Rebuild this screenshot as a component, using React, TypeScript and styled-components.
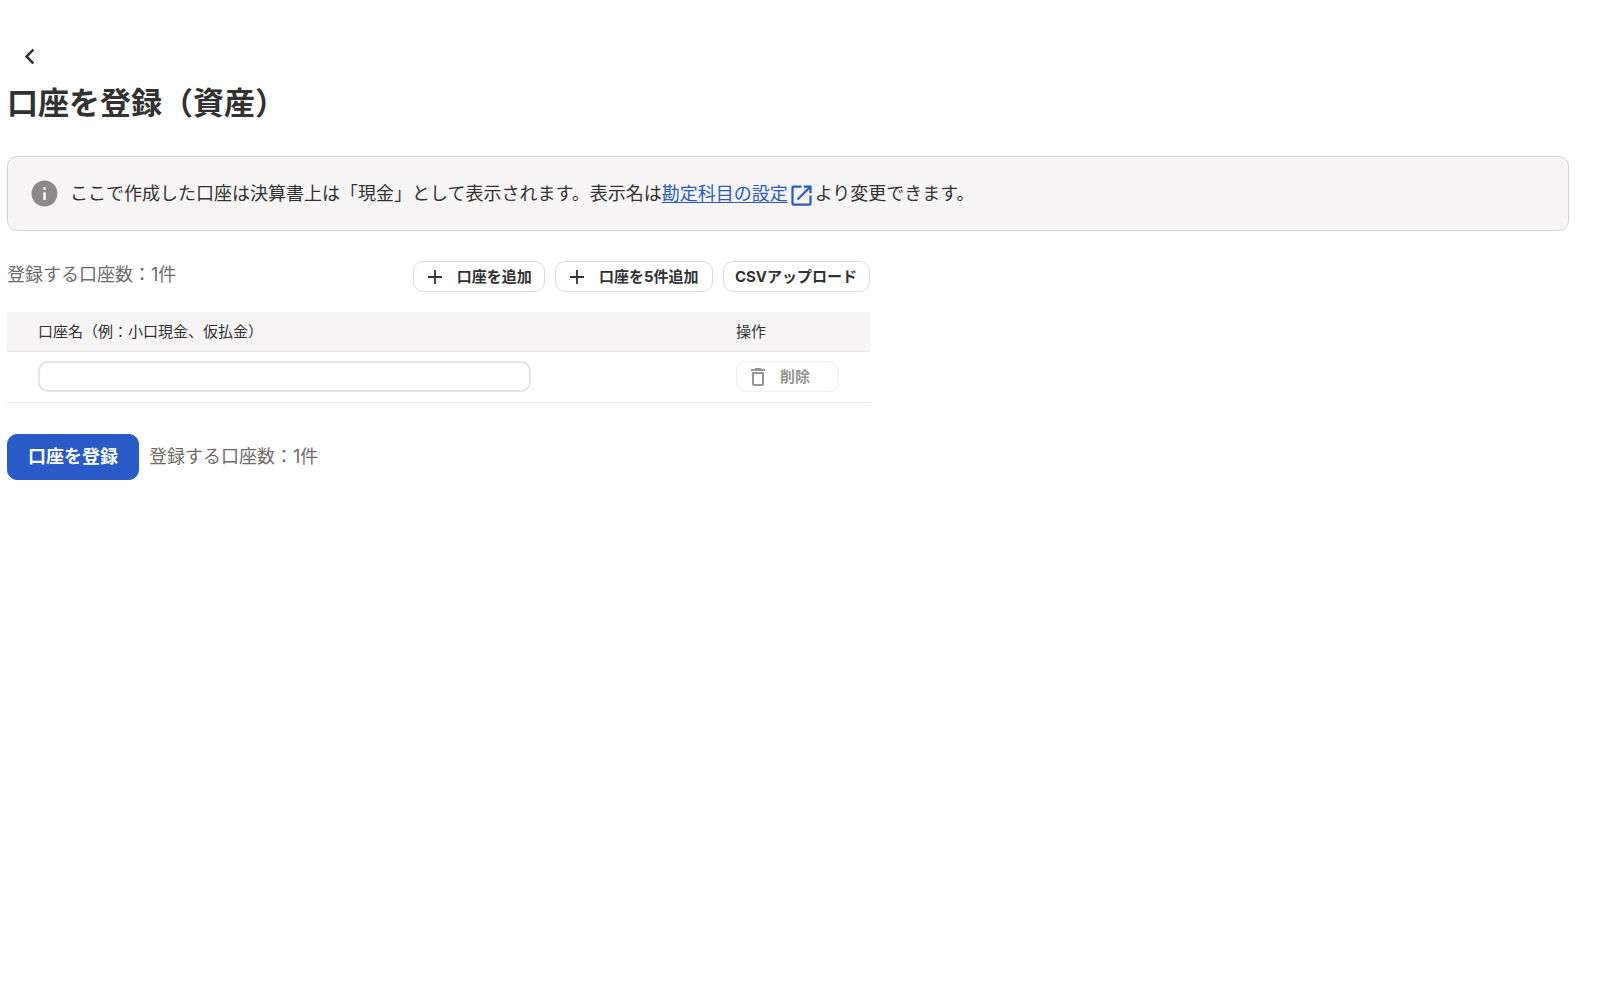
import React, { useState } from "react";
import styled, { createGlobalStyle } from "styled-components";

const GlobalStyle = createGlobalStyle`
  * { box-sizing: border-box; }
  body {
    margin: 0;
    background: #fff;
    color: #323232;
    font-family: Inter, "Noto Sans CJK JP", sans-serif;
    font-size: 18px;
    line-height: 28px;
  }
  button, input { font: inherit; color: inherit; }
`;

const Page = styled.main`
  padding: 40px 31px 40px 7px;
`;

const BackButton = styled.button`
  display: flex;
  align-items: center;
  justify-content: center;
  width: 44px;
  height: 32px;
  padding: 0;
  border: 0;
  background: none;
  cursor: pointer;
`;

const Title = styled.h1`
  margin: 8px 0 31px;
  font-size: 31px;
  line-height: 45px;
  font-weight: 700;
`;

const Notice = styled.div`
  display: flex;
  align-items: center;
  gap: 10px;
  min-height: 75px;
  padding: 16px 21px;
  border: 1px solid #d7d2d5;
  border-radius: 10px;
  background: #f6f4f5;
`;

const NoticeText = styled.p`
  margin: 0;
`;

const TextLink = styled.a`
  color: #285ac8;
  text-decoration: underline;
  text-underline-offset: 2px;
`;

const Icon = styled.svg<{ $size: number }>`
  flex: none;
  width: ${(p) => p.$size}px;
  height: ${(p) => p.$size}px;
  fill: currentColor;
`;

const InfoIcon = styled(Icon)`
  color: #8c8989;
`;

const LinkIcon = styled(Icon)`
  margin: -4px 0;
  vertical-align: -5px;
`;

const Section = styled.section`
  max-width: 863px;
`;

const Toolbar = styled.div`
  display: flex;
  align-items: flex-start;
  justify-content: space-between;
  margin: 30px 0 20px;
`;

const Count = styled.span`
  color: #6e6b6b;
`;

const ButtonGroup = styled.div`
  display: flex;
  gap: 10px;
`;

const SmallButton = styled.button<{ $width?: number }>`
  display: flex;
  align-items: center;
  gap: 10px;
  height: 31px;
  min-width: ${(p) => p.$width ?? 0}px;
  padding: 0 12px 0 ${(p) => (p.$width ? 9 : 11)}px;
  border: 1px solid #dedcdd;
  border-radius: 10px;
  background: #fff;
  font-size: 15px;
  font-weight: 700;
  line-height: 20px;
  white-space: nowrap;
  cursor: pointer;

  &:disabled {
    border-color: #efedee;
    color: #969393;
    cursor: default;
  }
`;

const Table = styled.table`
  width: 100%;
  table-layout: fixed;
  border-collapse: collapse;
  font-size: 15px;
  line-height: 23px;
`;

const HeadCell = styled.th<{ $width?: number }>`
  width: ${(p) => (p.$width ? `${p.$width}px` : "auto")};
  height: 39px;
  padding: 0 0 0 31px;
  border-bottom: 1px solid #e9e7e8;
  background: #f6f4f5;
  font-weight: 400;
  text-align: left;
`;

const Cell = styled.td`
  height: 51px;
  padding: 0 31px;
  border-bottom: 1px solid #e9e7e8;
`;

const NameInput = styled.input`
  display: block;
  width: 100%;
  max-width: 493px;
  height: 31px;
  padding: 0 10px;
  border: 2px solid #e6e4e5;
  border-radius: 10px;
  background: #fff;
`;

const Footer = styled.div`
  display: flex;
  align-items: center;
  gap: 10px;
  margin-top: 31px;
`;

const PrimaryButton = styled.button`
  height: 46px;
  padding: 0 20px;
  border: 1px solid #285ac8;
  border-radius: 10px;
  background: #285ac8;
  color: #fff;
  font-weight: 700;
  cursor: pointer;
`;

const PlusIcon = () => (
  <Icon $size={24} viewBox="0 0 24 24" aria-hidden="true">
    <path d="M19 12.900h-6.100V19h-1.800v-6.100H5v-1.800h6.100V5h1.800v6.100H19z" />
  </Icon>
);

export default function App() {
  const [names, setNames] = useState<string[]>([""]);
  const add = (n: number) => setNames((rows) => [...rows, ...Array(n).fill("")]);
  const update = (index: number, value: string) =>
    setNames((rows) => rows.map((row, i) => (i === index ? value : row)));
  const remove = (index: number) => setNames((rows) => rows.filter((_, i) => i !== index));
  const count = `登録する口座数：${names.length}件`;

  return (
    <>
      <GlobalStyle />
      <Page lang="ja">
        <BackButton type="button" aria-label="戻る">
          <Icon $size={31} viewBox="0 0 24 24" aria-hidden="true">
            <path d="M15.7 7.4 14.3 6l-6 6 6 6 1.4-1.4-4.6-4.6z" />
          </Icon>
        </BackButton>
        <Title>口座を登録（資産）</Title>
        <Notice>
          <InfoIcon $size={31} viewBox="0 0 24 24" aria-hidden="true">
            <path
              fillRule="evenodd"
              d="M12 2a10 10 0 1 0 0 20 10 10 0 0 0 0-20zm1 15h-2v-6h2v6zm0-8h-2V7h2v2z"
            />
          </InfoIcon>
          <NoticeText>
            ここで作成した口座は決算書上は「現金」として表示されます。表示名は
            <TextLink href="#account-items">
              勘定科目の設定
              <LinkIcon $size={27} viewBox="0 0 24 24" aria-hidden="true">
                <path d="M19 19H5V5h7V3H5a2 2 0 0 0-2 2v14a2 2 0 0 0 2 2h14a2 2 0 0 0 2-2v-7h-2v7zM14 3v2h3.6l-9.8 9.8 1.4 1.4L19 6.4V10h2V3h-7z" />
              </LinkIcon>
            </TextLink>
            より変更できます。
          </NoticeText>
        </Notice>
        <Section>
          <Toolbar>
            <Count>{count}</Count>
            <ButtonGroup>
              <SmallButton type="button" $width={132} onClick={() => add(1)}>
                <PlusIcon />
                口座を追加
              </SmallButton>
              <SmallButton type="button" $width={158} onClick={() => add(5)}>
                <PlusIcon />
                口座を5件追加
              </SmallButton>
              <SmallButton type="button">CSVアップロード</SmallButton>
            </ButtonGroup>
          </Toolbar>
          <Table>
            <thead>
              <tr>
                <HeadCell scope="col" id="account-name">
                  口座名（例：小口現金、仮払金）
                </HeadCell>
                <HeadCell scope="col" $width={165}>
                  操作
                </HeadCell>
              </tr>
            </thead>
            <tbody>
              {names.map((name, index) => (
                <tr key={index}>
                  <Cell>
                    <NameInput
                      type="text"
                      aria-labelledby="account-name"
                      value={name}
                      onChange={(event) => update(index, event.target.value)}
                    />
                  </Cell>
                  <Cell>
                    <SmallButton
                      type="button"
                      $width={103}
                      disabled={names.length === 1}
                      onClick={() => remove(index)}
                    >
                      <Icon $size={24} viewBox="0 0 24 24" aria-hidden="true">
                        <path
                          fillRule="evenodd"
                          d="M15.5 4l-1-1h-5l-1 1H5v2h14V4h-3.500zM6 19a2 2 0 0 0 2 2h8a2 2 0 0 0 2-2V7H6v12zM8 9h8v10H8V9z"
                        />
                      </Icon>
                      削除
                    </SmallButton>
                  </Cell>
                </tr>
              ))}
            </tbody>
          </Table>
          <Footer>
            <PrimaryButton type="button">口座を登録</PrimaryButton>
            <Count>{count}</Count>
          </Footer>
        </Section>
      </Page>
    </>
  );
}
